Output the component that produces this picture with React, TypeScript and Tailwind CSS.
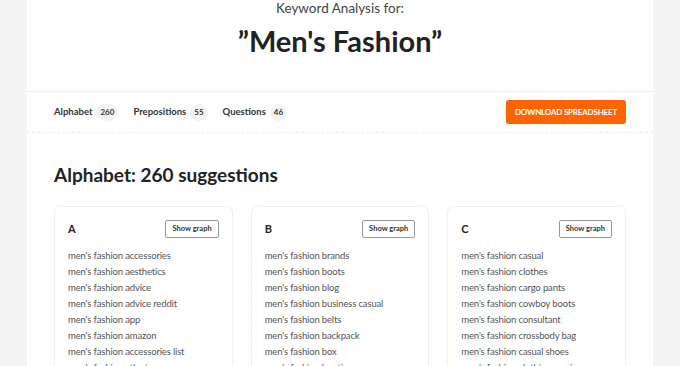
import React from 'react';

const columns: { letter: string; items: string[] }[] = [
  {
    letter: 'A',
    items: [
      "men's fashion accessories",
      "men's fashion aesthetics",
      "men's fashion advice",
      "men's fashion advice reddit",
      "men's fashion app",
      "men's fashion amazon",
      "men's fashion accessories list",
      "men's fashion atlanta",
    ],
  },
  {
    letter: 'B',
    items: [
      "men's fashion brands",
      "men's fashion boots",
      "men's fashion blog",
      "men's fashion business casual",
      "men's fashion belts",
      "men's fashion backpack",
      "men's fashion box",
      "men's fashion boutique",
    ],
  },
  {
    letter: 'C',
    items: [
      "men's fashion casual",
      "men's fashion clothes",
      "men's fashion cargo pants",
      "men's fashion cowboy boots",
      "men's fashion consultant",
      "men's fashion crossbody bag",
      "men's fashion casual shoes",
      "men's fashion clothing mexico",
    ],
  },
];

const tabs = [
  { label: 'Alphabet', count: 260 },
  { label: 'Prepositions', count: 55 },
  { label: 'Questions', count: 46 },
];

const App: React.FC = () => {
  return (
    <div
      className="h-[366px] overflow-hidden bg-[#f4f4f4] px-[27px]"
      style={{ fontFamily: 'Lato, "Noto Sans", sans-serif' }}
    >
      <div className="h-full bg-white">
        {/* header */}
        <div className="h-[92px] border-b border-[#efefef] text-center">
          <div className="pt-[1px] text-[13.5px] leading-[14px] text-[#444]">Keyword Analysis for:</div>
          <h1 className="mt-[9px] text-[29px] font-bold leading-[34px] text-[#222]">”Men's Fashion”</h1>
        </div>

        {/* tabs */}
        <div className="flex h-[41px] items-center justify-between border-b border-dashed border-[#ececec] px-[27px]">
          <div className="flex items-center gap-[15px]">
            {tabs.map(tab => (
              <div key={tab.label} className="flex items-center gap-[4px] text-[9.5px] font-bold text-[#333]">
                <span>{tab.label}</span>
                <span className="rounded-full bg-[#f2f2f2] px-[4px] py-[3px] text-[8px] font-bold leading-[11px]">{tab.count}</span>
              </div>
            ))}
          </div>
          <button className="h-[24px] rounded-[3px] bg-[#ff6400] px-[9px] text-[8px] font-bold uppercase tracking-[-0.2px] text-white">
            Download Spreadsheet
          </button>
        </div>

        {/* content */}
        <div className="px-[27px] pt-[29px]">
          <h2 className="text-[19px] font-bold leading-[26px] text-[#222]">Alphabet: 260 suggestions</h2>
          <div className="mt-[18px] grid grid-cols-3 gap-[18px]">
            {columns.map(col => (
              <div key={col.letter} className="rounded-[6px] border border-[#efefef] px-[13px] pt-[13px]">
                <div className="flex items-center justify-between">
                  <span className="text-[11px] font-bold text-[#222]">{col.letter}</span>
                  <button className="h-[18px] rounded-[2px] border border-[#999] px-[6px] text-[7.5px] font-bold text-[#333]">
                    Show graph
                  </button>
                </div>
                <ul className="mt-[10px] text-[9.5px] leading-[16px] tracking-[-0.15px] text-[#555]">
                  {col.items.map(item => (
                    <li key={item}>{item}</li>
                  ))}
                </ul>
              </div>
            ))}
          </div>
        </div>
      </div>
    </div>
  );
};

export default App;
